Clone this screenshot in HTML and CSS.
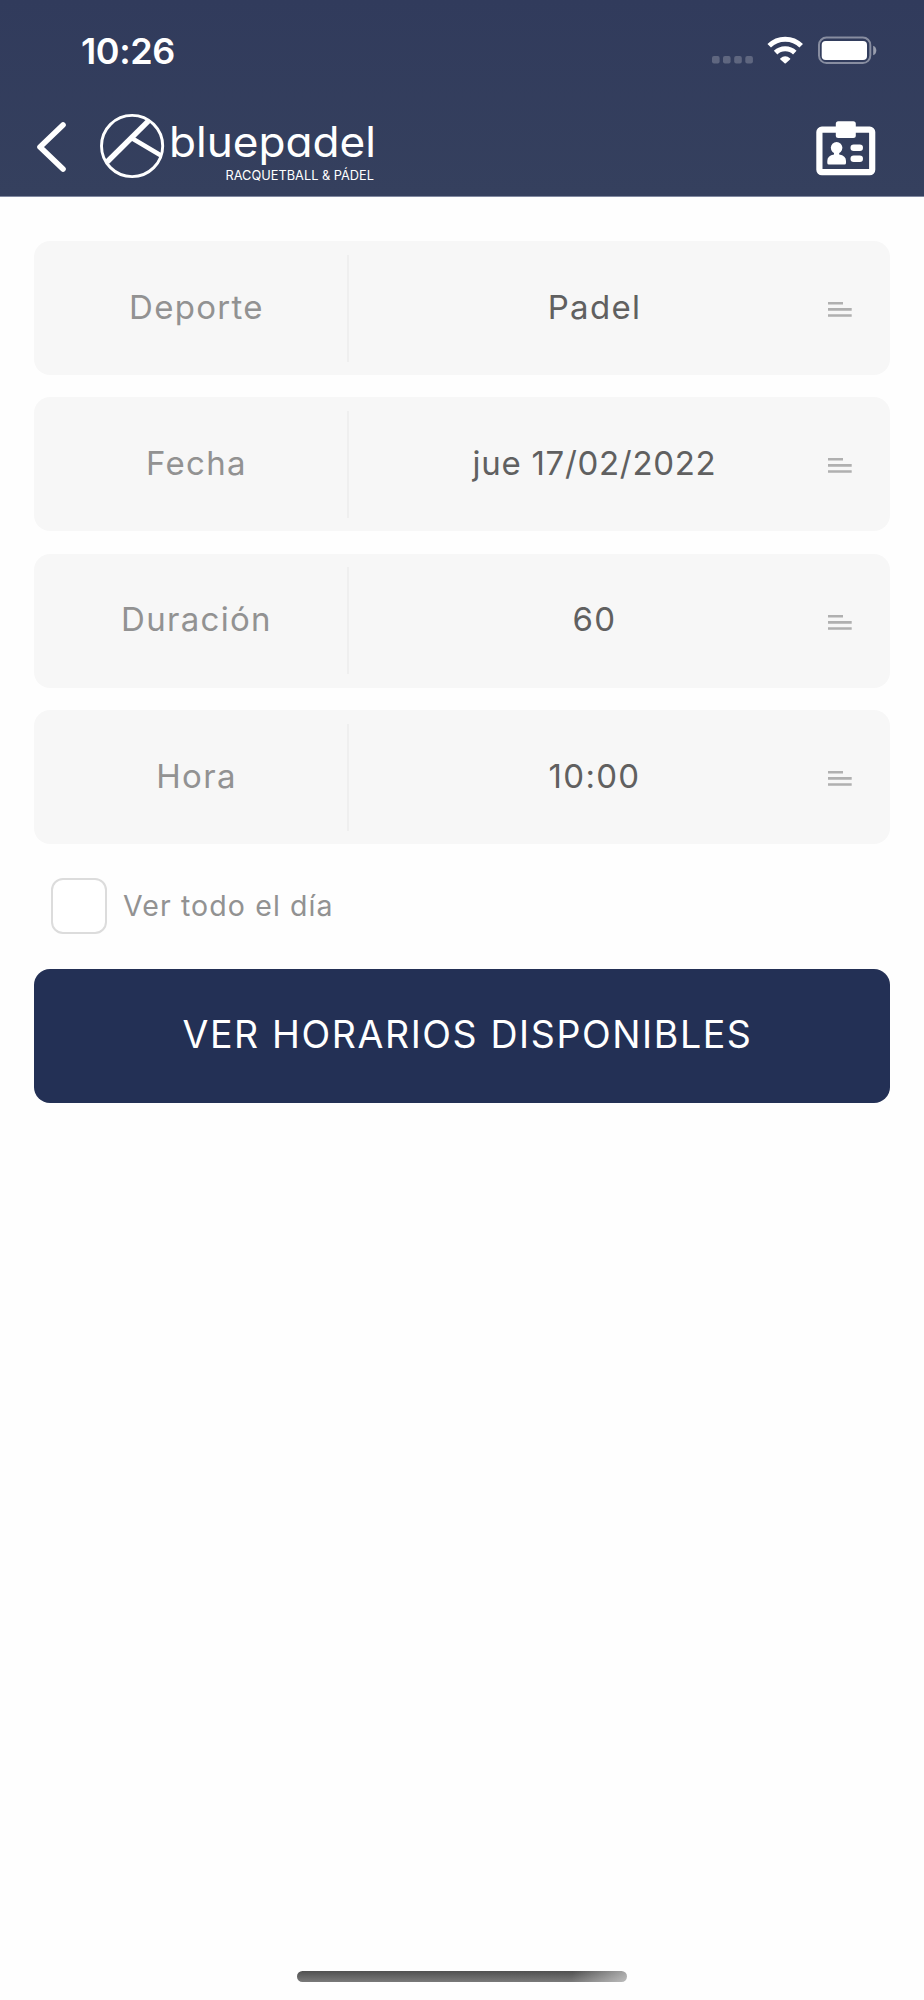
FILE: index.html
```html
<!DOCTYPE html>
<html lang="es">
<head>
<meta charset="utf-8">
<title>bluepadel</title>
<link rel="stylesheet" href="styles.css">
</head>
<body>
<div class="screen">
  <header class="header">
    <div class="status">
      <span class="time">10:26</span>
      <svg class="status-icons" width="166" height="30" viewBox="711 35 166 30">
        <g fill="#fff" fill-opacity=".22">
          <rect x="712" y="56" width="7.6" height="7.6" rx="2"/><rect x="723" y="56" width="7.6" height="7.6" rx="2"/><rect x="734.2" y="56" width="7.6" height="7.6" rx="2"/><rect x="745.3" y="56" width="7.6" height="7.6" rx="2"/>
        </g>
        <g fill="none" stroke="#fff" stroke-width="5">
          <path d="M769.2 45.8A22.6 22.6 0 0 1 801.2 45.8"/>
          <path d="M775.6 52.6A13.7 13.7 0 0 1 794.8 52.6"/>
        </g>
        <path d="M780.2 58.5Q785.2 54.2 790.2 58.5Q790.5 59 790 59.4L785.8 63.3Q785.2 63.8 784.6 63.3L780.4 59.4Q779.9 59 780.2 58.5Z" fill="#fff"/>
        <rect x="819" y="37.5" width="51.3" height="25.6" rx="7.5" fill="none" stroke="#fff" stroke-opacity=".42" stroke-width="2"/>
        <rect x="821.7" y="41" width="45.3" height="19" rx="4" fill="#fff"/>
        <path d="M873.2 45.7Q876.3 47 876.3 50.4T873.2 55.2Z" fill="#fff" fill-opacity=".5"/>
      </svg>
    </div>
    <nav class="nav">
      <svg class="back" width="30" height="54" viewBox="37 119 30 54"><path d="M63 124L40 146L63 168" fill="none" stroke="#fff" stroke-width="5.6" stroke-linecap="round" stroke-linejoin="round"/></svg>
      <svg class="logo" width="278" height="72" viewBox="99 112 278 72">
        <g fill="none" stroke="#fff">
          <circle cx="132.1" cy="146" r="30.6" stroke-width="2.9"/>
          <path d="M107 162L148.5 120.8" stroke-width="5.4"/>
          <path d="M131.5 138L161 155.5" stroke-width="4.4"/>
        </g>
        <text class="brand" x="169" y="156.6" textLength="207" lengthAdjust="spacingAndGlyphs">bluepadel</text>
        <text class="tagline" x="225.5" y="180" textLength="148.5" lengthAdjust="spacingAndGlyphs">RACQUETBALL &amp; PÁDEL</text>
      </svg>
      <svg class="badge" width="62" height="58" viewBox="815 118 62 58" fill="#fff">
        <rect x="819.4" y="128.6" width="52.8" height="42.6" rx="2.5" fill="none" stroke="#fff" stroke-width="6.2"/>
        <rect x="835.8" y="120.2" width="20" height="16.8" rx="2.5"/>
        <circle cx="836.6" cy="146.8" r="5.8"/>
        <path d="M834 150H839.2V153.5Q846 154.5 846 160V162Q846 163.5 844.5 163.5H828.8Q827.3 163.5 827.3 162V160Q827.3 154.5 834 153.5Z"/>
        <rect x="850.5" y="143.5" width="12.5" height="6.5" rx="3.2"/><rect x="850.5" y="154.5" width="12.5" height="6.5" rx="3.2"/>
      </svg>
    </nav>
  </header>
  <main class="form">
    <div class="field"><span class="label">Deporte</span><span class="value">Padel</span><svg class="menu" width="24" height="17"><path d="M0 2.3H15M0 8.4H23.7M0 14.5H23.7"/></svg></div>
    <div class="field"><span class="label">Fecha</span><span class="value date">jue 17/02/2022</span><svg class="menu" width="24" height="17"><path d="M0 2.3H15M0 8.4H23.7M0 14.5H23.7"/></svg></div>
    <div class="field"><span class="label">Duración</span><span class="value">60</span><svg class="menu" width="24" height="17"><path d="M0 2.3H15M0 8.4H23.7M0 14.5H23.7"/></svg></div>
    <div class="field"><span class="label">Hora</span><span class="value">10:00</span><svg class="menu" width="24" height="17"><path d="M0 2.3H15M0 8.4H23.7M0 14.5H23.7"/></svg></div>
    <div class="all-day"><span class="checkbox"></span><span class="check-label">Ver todo el día</span></div>
    <div class="submit"><span class="submit-text">VER HORARIOS DISPONIBLES</span></div>
  </main>
  <div class="home-bar"></div>
</div>
</body>
</html>
```
FILE: styles.css
```css
* { box-sizing: border-box; }
body { margin: 0; background: #fefefe; font-family: Inter, "Liberation Sans", sans-serif; }
.screen { width: 924px; height: 2000px; display: flex; flex-direction: column; }
.header { height: 197px; flex: none; background: linear-gradient(#313b5c, #35405e); border-bottom: 1px solid #8088a0; }
.status { height: 100px; padding: 0 47px 0 80px; display: flex; align-items: center; justify-content: space-between; }
.time { color: #fff; font-size: 36px; font-weight: 600; line-height: 44px; letter-spacing: -0.4px; padding: 1px 0 0 1px; }
.nav { height: 93px; padding: 0 47px 0 37px; display: flex; align-items: center; }
.logo { margin-left: 32px; margin-top: 3px; }
.badge { margin-left: auto; margin-top: 2px; }
.brand { font-size: 42px; font-weight: 400; fill: #fff; font-feature-settings: "cv11"; }
.tagline { font-size: 13px; font-weight: 400; fill: #fff; }
.form { padding: 44px 34px 0; display: flex; flex-direction: column; gap: 22.4px; flex: 1; }
.field { height: 134px; flex: none; border-radius: 16px; background: #f7f7f7; display: flex; align-items: center; font-size: 33px; font-weight: 400; line-height: 40px; letter-spacing: 1.3px; }
.label { width: 315px; height: 107px; padding: 0 0 3px 12px; display: flex; align-items: center; justify-content: center; border-right: 2px solid #efefef; color: #929292; }
.value { width: 479px; padding: 0 0 3px 12px; text-align: center; color: #606060; }
.date { letter-spacing: .7px; }
.menu { fill: none; stroke: #b0b0b0; stroke-width: 2.6; margin-top: 3px; }
.all-day { height: 56px; margin: 11.5px 0 12.5px 17px; flex: none; display: flex; align-items: center; gap: 16px; }
.checkbox { width: 56px; height: 56px; border: 2px solid #dcdcdc; border-radius: 12px; background: #fff; }
.check-label { font-size: 28.5px; font-weight: 400; line-height: 34px; letter-spacing: 1.1px; padding-bottom: 1px; color: #929292; }
.submit { height: 134px; flex: none; border-radius: 16px; background: #233055; display: flex; align-items: center; justify-content: center; padding: 0 0 1px 11px; color: #fff; font-size: 37.5px; font-weight: 400; line-height: 44px; letter-spacing: 1.6px; }
.home-bar { width: 330px; height: 11px; margin: 0 auto 18px; border-radius: 6px; background: linear-gradient(100deg, transparent 83%, rgba(255,255,255,.5) 100%), linear-gradient(#505050, #7a7a7a); }
```
